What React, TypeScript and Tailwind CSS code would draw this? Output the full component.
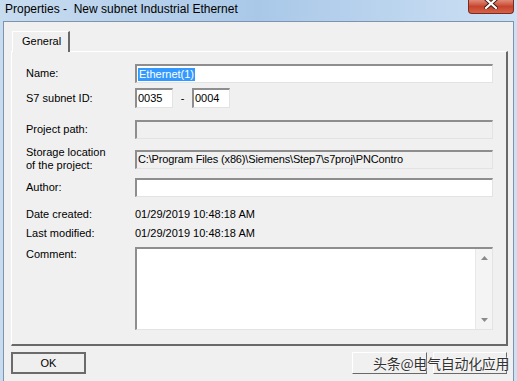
import React from 'react';

const font = { fontFamily: '"Liberation Sans", Arial, sans-serif' };

function Sunken({ className = '', disabled = false, children }: { className?: string; disabled?: boolean; children?: React.ReactNode }) {
  return (
    <div
      className={`border-t-2 border-l-2 border-b border-r border-t-[#8e8e8e] border-l-[#8e8e8e] border-b-[#e3e3e3] border-r-[#e3e3e3] flex items-center px-[1px] text-[11px] text-black ${disabled ? 'bg-[#f0f0f0]' : 'bg-white'} ${className}`}
    >
      {children}
    </div>
  );
}

function Row({ label, children, className = '' }: { label: React.ReactNode; children: React.ReactNode; className?: string }) {
  return (
    <div className={`flex items-center ${className}`}>
      <div className="w-[109px] shrink-0 text-[11px] leading-[13px] text-black">{label}</div>
      {children}
    </div>
  );
}

export default function App() {
  return (
    <div className="w-[517px] h-[381px] overflow-hidden flex flex-col bg-gradient-to-r from-[#c8dcf0] via-[#a9c8e8] to-[#cde0f4]" style={font}>
      {/* Title bar */}
      <div className="h-[21px] flex items-start justify-between shrink-0">
        <div className="pl-[5px] pt-[2px] text-[12px] leading-[15px] text-black">
          Properties -&nbsp; New subnet Industrial Ethernet
        </div>
        <div className="mr-[3px] w-[46px] h-[14px] rounded-b-[4px] border border-t-0 border-[#7a2a20] bg-gradient-to-b from-[#e08a78] via-[#c7432c] to-[#d4624a] flex items-start justify-center overflow-hidden">
          <svg width="14" height="10" viewBox="0 0 14 10" className="-mt-[1px]">
            <path d="M2 0 L12 9 M12 0 L2 9" stroke="#3b1a14" strokeWidth="4" strokeLinecap="square" />
            <path d="M2 0 L12 9 M12 0 L2 9" stroke="#ffffff" strokeWidth="2.2" strokeLinecap="square" />
          </svg>
        </div>
      </div>

      {/* Client area */}
      <div className="flex-1 ml-[3px] mr-[3px] border-t border-l border-r border-[#7f93ad] bg-[#f0f0f0] flex flex-col">
        {/* Tab */}
        <div className="ml-[8px] mt-[9px] flex">
          <div className="relative z-10 w-[58px] h-[21px] bg-[#f0f0f0] border-t border-l border-white border-r-2 border-r-[#696969] pl-[9px] pt-[3px] text-[11px] leading-[13px] text-black">
            General
          </div>
        </div>

        {/* Panel */}
        <div className="ml-[7px] -mt-[1px] w-[497px] h-[295px] border-t border-l border-white border-r-2 border-b-2 border-r-[#696969] border-b-[#696969] flex flex-col pl-[14px]">
          <Row label="Name:" className="mt-[12px]">
            <Sunken className="w-[358px] h-[19px]">
              <span className="bg-[#3399ff] text-white leading-[13px] px-[1px]">Ethernet(1)</span>
            </Sunken>
          </Row>

          <Row label="S7 subnet ID:" className="mt-[5px]">
            <Sunken className="w-[38px] h-[20px]">0035</Sunken>
            <span className="w-[19px] text-center text-[11px] text-black">-</span>
            <Sunken className="w-[38px] h-[20px]">0004</Sunken>
          </Row>

          <Row label="Project path:" className="mt-[12px]">
            <Sunken disabled className="w-[358px] h-[19px]" />
          </Row>

          <Row
            label={
              <>
                Storage location
                <br />
                of the project:
              </>
            }
            className="mt-[10px] h-[20px]"
          >
            <Sunken disabled className="w-[358px] h-[19px] whitespace-nowrap overflow-hidden tracking-[-0.15px]">
              C:\Program Files (x86)\Siemens\Step7\s7proj\PNContro
            </Sunken>
          </Row>

          <Row label="Author:" className="mt-[9px]">
            <Sunken className="w-[358px] h-[19px]" />
          </Row>

          <Row label="Date created:" className="mt-[10px] h-[14px]">
            <span className="text-[11px] text-black">01/29/2019 10:48:18 AM</span>
          </Row>

          <Row label="Last modified:" className="mt-[5px] h-[14px]">
            <span className="text-[11px] text-black">01/29/2019 10:48:18 AM</span>
          </Row>

          <div className="flex items-start mt-[7px]">
            <div className="w-[109px] shrink-0 text-[11px] leading-[13px] text-black pt-[1px]">Comment:</div>
            <Sunken className="w-[358px] h-[83px] !items-stretch !px-0 justify-end">
              <div className="w-[17px] bg-[#f4f4f4] border-l border-[#e8e8e8] flex flex-col items-center justify-between py-[7px]">
                <svg width="7" height="4" viewBox="0 0 7 4"><path d="M0 4 L3.5 0 L7 4 Z" fill="#8a8a8a" /></svg>
                <svg width="7" height="4" viewBox="0 0 7 4"><path d="M0 0 L3.5 4 L7 0 Z" fill="#8a8a8a" /></svg>
              </div>
            </Sunken>
          </div>
        </div>

        {/* Buttons */}
        <div className="relative mt-[6px] ml-[7px] flex">
          <div className="w-[75px] h-[22px] border-2 border-[#6b6b6b] bg-[#efefef] flex items-center justify-center text-[11px] text-black">
            OK
          </div>
          <div className="ml-[266px] w-[75px] h-[22px] border-t border-l border-white border-r border-b border-r-[#696969] border-b-[#696969] bg-[#f0f0f0]" />
          <div className="ml-[6px] w-[74px] h-[22px] border-t border-l border-white border-r border-b border-r-[#696969] border-b-[#696969] bg-[#f0f0f0]" />
          <div
            className="absolute left-[362px] top-[2px] text-[14px] leading-[18px] text-[#333333] whitespace-nowrap tracking-[-0.3px]"
            style={{ fontFamily: '"Noto Sans CJK SC", sans-serif', textShadow: '0 0 2px #ffffff, 0 0 1px #ffffff' }}
          >
            头条@电气自动化应用
          </div>
        </div>
      </div>
    </div>
  );
}
